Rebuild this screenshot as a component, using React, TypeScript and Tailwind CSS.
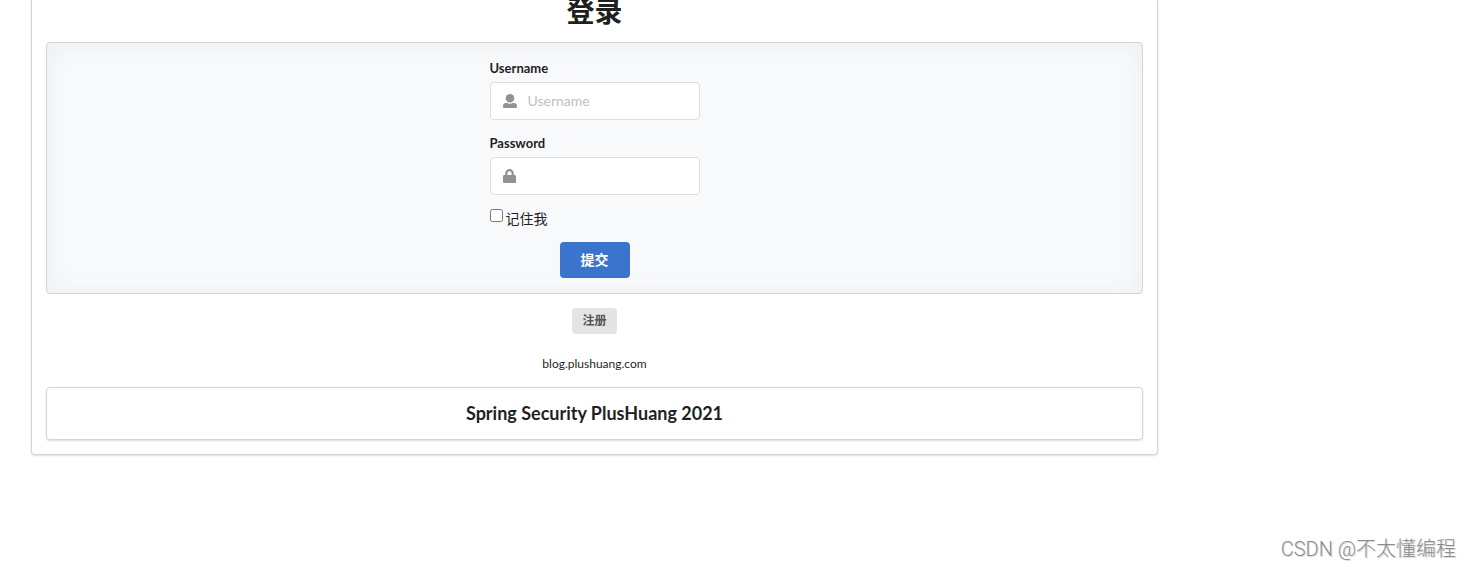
import type { ReactNode } from "react";

function UserIcon() {
  return (
    <svg viewBox="0 0 14 14" className="h-3.5 w-3.5" fill="currentColor" aria-hidden="true">
      <circle cx="7" cy="4.300" r="4.300" />
      <path d="M3 9h1.200c1.700 1 3.900 1 5.600 0H11c1.700 0 3 1.200 3 2.900v1c0 .7-.5 1.100-1.200 1.100H1.200C.5 14 0 13.600 0 12.900v-1C0 10.200 1.300 9 3 9Z" />
    </svg>
  );
}

function LockIcon() {
  return (
    <svg viewBox="0 0 14 14" className="h-3.5 w-3.5" fill="currentColor" aria-hidden="true">
      <path
        fillRule="evenodd"
        d="M2.200 6V4.300a4.300 4.300 0 0 1 8.600 0V6h.9c.7 0 1.300.6 1.300 1.300v5.400c0 .7-.6 1.300-1.300 1.300H1.300C.6 14 0 13.400 0 12.700V7.300C0 6.600.6 6 1.300 6h.9Zm2.200 0h4.200V4.300a2.100 2.100 0 0 0-4.200 0V6Z"
      />
    </svg>
  );
}

type FieldProps = {
  id: string;
  label: string;
  type: string;
  placeholder?: string;
  icon: ReactNode;
};

function Field({ id, label, type, placeholder, icon }: FieldProps) {
  return (
    <div className="flex flex-col gap-1">
      <label htmlFor={id} className="text-[13px] leading-[19px] font-bold">
        {label}
      </label>
      <div className="relative">
        <span className="pointer-events-none absolute inset-y-0 left-[13px] flex items-center text-[#929292]">
          {icon}
        </span>
        <input
          id={id}
          type={type}
          placeholder={placeholder}
          className="block h-[38px] w-full rounded border border-[#dededf] bg-white pr-3.5 pb-0.5 pl-[37px] text-sm outline-none placeholder:text-[#bfbfbf] focus:border-[#85b7d9]"
        />
      </div>
    </div>
  );
}

export default function App() {
  return (
    <div className="relative min-h-screen bg-white pr-8 pl-[31px] font-['Lato','Noto_Sans_CJK_SC',sans-serif] text-sm text-[#1f1f1f]">
      <main className="flex max-w-[1127px] flex-col items-center rounded-b border border-t-0 border-[#d4d4d5] px-3.5 pb-3.5 shadow-[0_1px_2px_0_rgba(34,36,38,0.15)]">
        <h1 className="mb-5 text-[28px] leading-[22px] font-bold">登录</h1>

        <form
          className="flex w-full flex-col items-center rounded border border-[#d4d4d5] bg-[#f8f9fb] px-3.5 pt-4 pb-[15px] shadow-[inset_0_2px_25px_0_rgba(34,36,38,0.05)]"
          onSubmit={(event) => event.preventDefault()}
        >
          <div className="flex w-[210px] flex-col gap-3.5">
            <Field id="username" label="Username" type="text" placeholder="Username" icon={<UserIcon />} />
            <Field id="password" label="Password" type="password" icon={<LockIcon />} />
            <div className="flex h-[19px] items-start gap-[3px]">
              <input id="remember" type="checkbox" className="m-0 h-[13px] w-[13px]" />
              <label htmlFor="remember" className="leading-[19px]">
                记住我
              </label>
            </div>
            <button
              type="submit"
              className="h-9 self-center rounded bg-[#3a74cc] px-[21px] text-sm font-bold text-white"
            >
              提交
            </button>
          </div>
        </form>

        <button
          type="button"
          className="mt-3.5 h-[26px] rounded bg-[#e4e4e4] px-2.5 text-xs font-bold text-[#555555]"
        >
          注册
        </button>

        <a href="https://blog.plushuang.com" className="mt-5 text-xs leading-5">
          blog.plushuang.com
        </a>

        <footer className="mt-[13px] w-full rounded border border-[#d4d4d5] py-3.5 text-center shadow-[0_1px_2px_0_rgba(34,36,38,0.15)]">
          <h2 className="text-lg leading-[23px] font-bold">Spring Security PlusHuang 2021</h2>
        </footer>
      </main>

      <p className="absolute right-4 bottom-[5px] font-['Roboto','Noto_Sans_CJK_SC',sans-serif] text-xl leading-7 font-light text-[#8c8c8c] [text-shadow:1px_1px_0_#dcdcdc]">
        CSDN @不太懂编程
      </p>
    </div>
  );
}
